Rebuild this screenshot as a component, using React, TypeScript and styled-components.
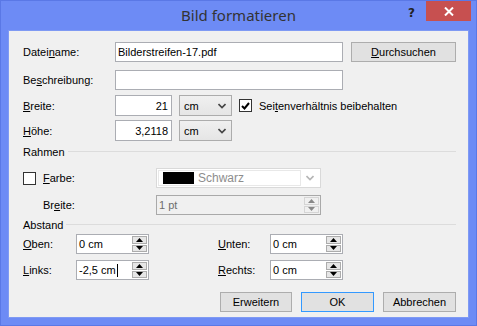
import styled, { createGlobalStyle } from 'styled-components';

const GlobalStyle = createGlobalStyle`
  html, body {
    margin: 0;
    padding: 0;
    background: #ffffff;
  }
  * {
    box-sizing: border-box;
  }
`;

// --------------------------
// WINDOW FRAME
// --------------------------
const Window = styled.div`
  width: 477px;
  height: 326px;
  background: #6d8bf5;
  border: 1px solid #5a78e6;
  display: flex;
  flex-direction: column;
  font-family: "Liberation Sans", Arial, sans-serif;
  font-size: 11px;
  color: #000;
`;

const TitleBar = styled.div`
  height: 29px;
  display: grid;
  grid-template-columns: 1fr auto 1fr;
  align-items: start;
`;

const Title = styled.div`
  grid-column: 2;
  font-family: "Noto Sans", "Open Sans", sans-serif;
  font-size: 15px;
  line-height: 29px;
  color: #333333;
  padding-top: 0;
`;

const Controls = styled.div`
  grid-column: 3;
  justify-self: end;
  display: flex;
  margin-right: 5px;
`;

const HelpButton = styled.div`
  width: 29px;
  height: 20px;
  display: flex;
  align-items: center;
  justify-content: center;
  font-family: "DejaVu Sans", sans-serif;
  font-weight: bold;
  font-size: 12px;
  color: #222;
  padding-top: 3px;
`;

const CloseButton = styled.div`
  width: 45px;
  height: 20px;
  background: #c75050;
  display: flex;
  align-items: center;
  justify-content: center;
`;

const Client = styled.div`
  flex: 1;
  margin: 0 7px 7px 7px;
  background: #f0f0f0;
  border: 1px solid #7f9af3;
  padding: 0 12px 0 14px;
  display: flex;
  flex-direction: column;
`;

// --------------------------
// FORM PARTS
// --------------------------
const Row = styled.div<{ $mt: number; $h: number }>`
  display: flex;
  align-items: center;
  margin-top: ${(p) => p.$mt}px;
  height: ${(p) => p.$h}px;
`;

const Label = styled.span<{ $w: number; $indent?: number }>`
  width: ${(p) => p.$w}px;
  margin-left: ${(p) => p.$indent || 0}px;
  flex: none;
  white-space: nowrap;
`;

const Key = styled.span`
  text-decoration: underline;
  text-underline-offset: 1px;
`;

const TextInput = styled.div<{ $w: number; $right?: boolean }>`
  width: ${(p) => p.$w}px;
  height: 100%;
  background: #fff;
  border: 1px solid #abadb3;
  display: flex;
  align-items: center;
  justify-content: ${(p) => (p.$right ? 'flex-end' : 'flex-start')};
  padding: 0 ${(p) => (p.$right ? 3 : 2)}px;
  flex: none;
  white-space: nowrap;
`;

const Button = styled.div<{ $w: number; $default?: boolean }>`
  width: ${(p) => p.$w}px;
  height: 20px;
  background: #e1e1e1;
  border: 1px solid ${(p) => (p.$default ? '#3399ff' : '#adadad')};
  display: flex;
  align-items: center;
  justify-content: center;
  flex: none;
`;

const Select = styled.div`
  width: 53px;
  height: 100%;
  margin-left: 7px;
  background: linear-gradient(#f0f0f0, #e5e5e5);
  border: 1px solid #acacac;
  display: flex;
  align-items: center;
  justify-content: space-between;
  padding: 0 5px 0 4px;
  flex: none;
`;

const CheckBox = styled.div<{ $ml?: number }>`
  width: 13px;
  height: 13px;
  margin-left: ${(p) => p.$ml || 0}px;
  margin-right: 7px;
  background: #fff;
  border: 1px solid #333;
  display: flex;
  align-items: center;
  justify-content: center;
  flex: none;
`;

const GroupHeader = styled.div<{ $mt: number }>`
  display: flex;
  align-items: center;
  gap: 3px;
  height: 11px;
  margin-top: ${(p) => p.$mt}px;
  &::after {
    content: '';
    flex: 1;
    height: 1px;
    background: #dcdcdc;
  }
`;

const ColorCombo = styled.div`
  width: 165px;
  height: 100%;
  border: 1px solid #d9d9d9;
  background: #fff;
  display: flex;
  align-items: center;
  padding: 1px;
`;

const ColorField = styled.div`
  flex: 1;
  height: 100%;
  border: 1px solid #e8e8e8;
  display: flex;
  align-items: center;
  padding-left: 4px;
  color: #8d8d8d;
  font-size: 12px;
`;

const Swatch = styled.span`
  width: 31px;
  height: 12px;
  background: #000;
  margin-right: 4px;
`;

const ComboArrow = styled.div`
  width: 18px;
  display: flex;
  justify-content: center;
`;

const Spin = styled.div<{ $w: number; $disabled?: boolean }>`
  width: ${(p) => p.$w}px;
  height: 100%;
  background: ${(p) => (p.$disabled ? '#f0f0f0' : '#fff')};
  border: 1px solid ${(p) => (p.$disabled ? '#a9a9a9' : '#abadb3')};
  color: ${(p) => (p.$disabled ? '#6d6d6d' : '#000')};
  display: flex;
  align-items: stretch;
  padding: 1px;
  flex: none;
`;

const SpinText = styled.div`
  flex: 1;
  display: flex;
  align-items: center;
  padding-left: 1px;
  white-space: nowrap;
`;

const Caret = styled.span`
  width: 1px;
  height: 13px;
  background: #000;
  margin-left: 1px;
`;

const SpinButtons = styled.div`
  width: 15px;
  display: flex;
  flex-direction: column;
  gap: 1px;
`;

const SpinButton = styled.div<{ $disabled?: boolean }>`
  flex: 1;
  background: ${(p) => (p.$disabled ? '#f0f0f0' : '#e6e6e6')};
  border: 1px solid ${(p) => (p.$disabled ? '#d5d5d5' : '#acacac')};
  display: flex;
  align-items: center;
  justify-content: center;
`;

const Footer = styled.div`
  display: flex;
  justify-content: flex-end;
  gap: 9px;
  margin-top: 12px;
`;

const Chevron = ({ color = '#444' }: { color?: string }) => (
  <svg width="8" height="6" viewBox="0 0 8 6">
    <polyline points="0.5,1 4,4.5 7.5,1" fill="none" stroke={color} strokeWidth="1.6" />
  </svg>
);

const Arrow = ({ up, color = '#000' }: { up?: boolean; color?: string }) => (
  <svg width="7" height="4" viewBox="0 0 7 4">
    <polygon points={up ? '3.5,0 7,4 0,4' : '0,0 7,0 3.5,4'} fill={color} />
  </svg>
);

const SpinBox = ({ w, children, disabled }: { w: number; children: React.ReactNode; disabled?: boolean }) => (
  <Spin $w={w} $disabled={disabled}>
    <SpinText>{children}</SpinText>
    <SpinButtons>
      <SpinButton $disabled={disabled}><Arrow up color={disabled ? '#888' : '#000'} /></SpinButton>
      <SpinButton $disabled={disabled}><Arrow color={disabled ? '#888' : '#000'} /></SpinButton>
    </SpinButtons>
  </Spin>
);

const App = () => {
  return (
    <>
      <GlobalStyle />
      <Window>
        <TitleBar>
          <Title>Bild formatieren</Title>
          <Controls>
            <HelpButton>?</HelpButton>
            <CloseButton>
              <svg width="10" height="9" viewBox="0 0 10 9">
                <path d="M1 0.5 L9 8.5 M9 0.5 L1 8.5" stroke="#fff" strokeWidth="2" />
              </svg>
            </CloseButton>
          </Controls>
        </TitleBar>

        <Client>
          <Row $mt={11} $h={20}>
            <Label $w={92}>Datei<Key>n</Key>ame:</Label>
            <TextInput $w={228}>Bilderstreifen-17.pdf</TextInput>
            <div style={{ flex: 1 }} />
            <Button $w={105}><span><Key>D</Key>urchsuchen</span></Button>
          </Row>
          <Row $mt={8} $h={20}>
            <Label $w={92}>Be<Key>s</Key>chreibung:</Label>
            <TextInput $w={228} />
          </Row>
          <Row $mt={5} $h={21}>
            <Label $w={92}><Key>B</Key>reite:</Label>
            <TextInput $w={57} $right>21</TextInput>
            <Select>cm<Chevron /></Select>
            <CheckBox $ml={7}>
              <svg width="9" height="8" viewBox="0 0 9 8">
                <polyline points="1,4 3.5,6.5 8,1" fill="none" stroke="#000" strokeWidth="2" />
              </svg>
            </CheckBox>
            <span>Sei<Key>t</Key>enverhältnis beibehalten</span>
          </Row>
          <Row $mt={4} $h={21}>
            <Label $w={92}><Key>H</Key>öhe:</Label>
            <TextInput $w={57} $right>3,2118</TextInput>
            <Select>cm<Chevron /></Select>
          </Row>

          <GroupHeader $mt={5}>Rahmen</GroupHeader>
          <Row $mt={11} $h={20}>
            <CheckBox />
            <Label $w={113}><Key>F</Key>arbe:</Label>
            <ColorCombo>
              <ColorField><Swatch />Schwarz</ColorField>
              <ComboArrow><Chevron color="#b5b5b5" /></ComboArrow>
            </ColorCombo>
          </Row>
          <Row $mt={7} $h={20}>
            <Label $w={113} $indent={20}>Br<Key>e</Key>ite:</Label>
            <SpinBox w={165} disabled>1 pt</SpinBox>
          </Row>

          <GroupHeader $mt={4}>Abstand</GroupHeader>
          <Row $mt={4} $h={20}>
            <Label $w={53}><Key>O</Key>ben:</Label>
            <SpinBox w={73}>0 cm</SpinBox>
            <Label $w={52} $indent={69}><Key>U</Key>nten:</Label>
            <SpinBox w={73}>0 cm</SpinBox>
          </Row>
          <Row $mt={6} $h={20}>
            <Label $w={53}><Key>L</Key>inks:</Label>
            <SpinBox w={73}>-2,5 cm<Caret /></SpinBox>
            <Label $w={52} $indent={69}><Key>R</Key>echts:</Label>
            <SpinBox w={73}>0 cm</SpinBox>
          </Row>

          <Footer>
            <Button $w={72}>Erweitern</Button>
            <Button $w={73} $default>OK</Button>
            <Button $w={73}>Abbrechen</Button>
          </Footer>
        </Client>
      </Window>
    </>
  );
};

export default App;
